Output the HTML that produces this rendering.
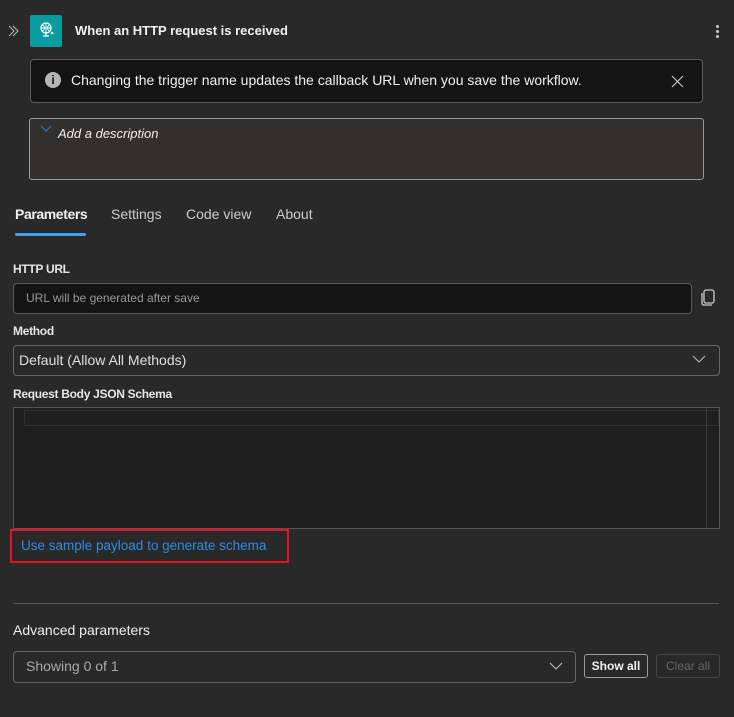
<!DOCTYPE html>
<html><head><meta charset="utf-8"><style>
body{margin:0;width:734px;height:717px;background:#292929;font-family:"Liberation Sans",sans-serif;color:#e6e6e6;position:relative;overflow:hidden}
.a{position:absolute}
.lbl{font-size:12px;font-weight:bold;color:#e6e6e6;letter-spacing:-0.3px}
</style></head><body>
<svg class="a" style="left:8px;top:25px" width="12" height="12" viewBox="0 0 12 12"><path d="M1 1l5 5-5 5M5 1l5 5-5 5" fill="none" stroke="#bbb" stroke-width="1"/></svg>
<div class="a" style="left:30px;top:15px;width:32px;height:32px;background:#0a9ca0;border-radius:2px"></div>
<svg class="a" style="left:38px;top:21px" width="18" height="18" viewBox="0 0 18 18"><circle cx="8" cy="7" r="5" fill="none" stroke="#fff" stroke-width="1.2"/><path d="M3 7h10M8 2v10M5 4q3 3 0 6M11 4q-3 3 0 6" fill="none" stroke="#fff" stroke-width="0.9"/><path d="M8 12v3M5 15h6" stroke="#fff" stroke-width="1.2"/><path d="M13 11l2 1-2 1" fill="none" stroke="#fff"/></svg>
<div class="a" style="left:75px;top:23px;font-size:13px;font-weight:bold;color:#f0f0f0">When an HTTP request is received</div>
<div class="a" style="left:716px;top:25px;width:3px;height:3px;background:#ccc;border-radius:50%;box-shadow:0 5px 0 #ccc,0 10px 0 #ccc"></div>

<div class="a" style="left:30px;top:59px;width:671px;height:42px;background:#141414;border:1px solid #5a5a5a;border-radius:4px"></div>
<div class="a" style="left:45px;top:72px;width:16px;height:16px;border-radius:50%;background:#b5b5b5;color:#141414;font-size:12px;font-weight:bold;text-align:center;line-height:16px">i</div>
<div class="a" style="left:71px;top:72px;font-size:14px;color:#f0f0f0">Changing the trigger name updates the callback URL when you save the workflow.</div>
<svg class="a" style="left:671px;top:75px" width="13" height="13" viewBox="0 0 13 13"><path d="M1 1l11 11M12 1L1 12" stroke="#ccc" stroke-width="1.1"/></svg>

<div class="a" style="left:29px;top:118px;width:673px;height:60px;background:#32302f;border:1px solid #9a9a9a;border-radius:3px"></div>
<svg class="a" style="left:40px;top:125px" width="12" height="8" viewBox="0 0 12 8"><path d="M1 1l5 5 5-5" fill="none" stroke="#2b7fd0" stroke-width="1.1"/></svg>
<div class="a" style="left:58px;top:126px;font-size:13px;font-style:italic;color:#eee">Add a description</div>

<div class="a" style="left:15px;top:206px;font-size:14px;font-weight:bold;color:#f0f0f0;letter-spacing:-0.4px">Parameters</div>
<div class="a" style="left:111px;top:206px;font-size:14px;color:#ccc">Settings</div>
<div class="a" style="left:186px;top:206px;font-size:14px;color:#ccc">Code view</div>
<div class="a" style="left:276px;top:206px;font-size:14px;color:#ccc">About</div>
<div class="a" style="left:15px;top:233px;width:71px;height:3px;background:#479ef5;border-radius:2px"></div>

<div class="a lbl" style="left:13px;top:262px">HTTP URL</div>
<div class="a" style="left:13px;top:283px;width:677px;height:29px;background:#141414;border:1px solid #5a5a5a;border-radius:4px"></div>
<div class="a" style="left:26px;top:291px;font-size:12px;color:#999">URL will be generated after save</div>
<svg class="a" style="left:700px;top:289px" width="16" height="18" viewBox="0 0 16 18"><rect x="4" y="1" width="10" height="13" rx="2" fill="none" stroke="#ccc" stroke-width="1.3"/><path d="M2 4v10q0 2 2 2h8" fill="none" stroke="#ccc" stroke-width="1.3"/></svg>

<div class="a lbl" style="left:13px;top:324px">Method</div>
<div class="a" style="left:13px;top:345px;width:705px;height:29px;background:#292929;border:1px solid #666;border-radius:4px"></div>
<div class="a" style="left:19px;top:352px;font-size:14px;color:#e0e0e0">Default (Allow All Methods)</div>
<svg class="a" style="left:692px;top:355px" width="14" height="9" viewBox="0 0 14 9"><path d="M1 1l6 6 6-6" fill="none" stroke="#bbb" stroke-width="1.1"/></svg>

<div class="a lbl" style="left:13px;top:387px">Request Body JSON Schema</div>
<div class="a" style="left:13px;top:407px;width:705px;height:120px;background:#1f1f1f;border:1px solid #555"></div>
<div class="a" style="left:24px;top:410px;width:693px;height:14px;border:1px solid #303030"></div>
<div class="a" style="left:706px;top:408px;width:1px;height:120px;background:#3a3a3a"></div>

<div class="a" style="left:10px;top:529px;width:275px;height:30px;border:2px solid #e81123"></div>
<div class="a" style="left:21px;top:538px;font-size:13.5px;color:#2f8ae0">Use sample payload to generate schema</div>

<div class="a" style="left:13px;top:603px;width:706px;height:1px;background:#555"></div>
<div class="a" style="left:13px;top:622px;font-size:14px;color:#eee">Advanced parameters</div>
<div class="a" style="left:13px;top:651px;width:561px;height:30px;border:1px solid #666;border-radius:4px"></div>
<div class="a" style="left:26px;top:658px;font-size:14px;color:#aaa">Showing 0 of 1</div>
<svg class="a" style="left:549px;top:662px" width="14" height="9" viewBox="0 0 14 9"><path d="M1 1l6 6 6-6" fill="none" stroke="#bbb" stroke-width="1.1"/></svg>
<div class="a" style="left:584px;top:654px;width:62px;height:22px;border:1px solid #999;border-radius:3px;font-size:12px;font-weight:bold;text-align:center;line-height:22px;color:#f0f0f0">Show all</div>
<div class="a" style="left:656px;top:654px;width:62px;height:22px;border:1px solid #444;border-radius:3px;font-size:12px;text-align:center;line-height:22px;color:#666">Clear all</div>
</body></html>
